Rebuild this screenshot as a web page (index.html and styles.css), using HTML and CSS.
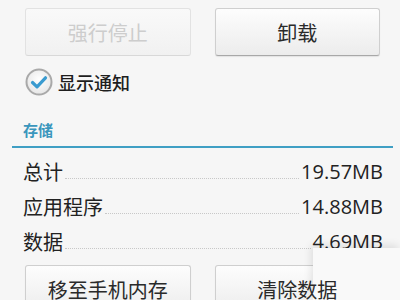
FILE: index.html
```html
<!DOCTYPE html>
<html lang="zh-CN">
<head>
<meta charset="utf-8">
<link rel="stylesheet" href="styles.css">
</head>
<body>
<div class="page">
  <div class="btn-row top">
    <div class="btn disabled"><span class="btn-text">强行停止</span></div>
    <div class="btn"><span class="btn-text">卸载</span></div>
  </div>
  <div class="check-row">
    <svg class="check" width="28" height="28" viewBox="0 0 28 28">
      <defs>
        <radialGradient id="g" cx="50%" cy="40%" r="60%">
          <stop offset="0" stop-color="#ffffff"/>
          <stop offset="1" stop-color="#e6e6e6"/>
        </radialGradient>
      </defs>
      <circle cx="14" cy="14" r="12.5" fill="url(#g)" stroke="#a9a9a9" stroke-width="2"/>
      <path d="M7.5 14.5 L12 18.8 L20.5 9.8" fill="none" stroke="#3a9bd0" stroke-width="3.2" stroke-linecap="round" stroke-linejoin="round"/>
    </svg>
    <span class="check-label">显示通知</span>
  </div>
  <div class="section">存储</div>
  <div class="rows">
    <div class="row"><span class="label">总计</span><span class="dots"></span><span class="value">19.57MB</span></div>
    <div class="row"><span class="label">应用程序</span><span class="dots"></span><span class="value">14.88MB</span></div>
    <div class="row"><span class="label">数据</span><span class="dots"></span><span class="value">4.69MB</span></div>
  </div>
  <div class="btn-row bottom">
    <div class="btn"><span class="btn-text">移至手机内存</span></div>
    <div class="btn"><span class="btn-text">清除数据</span></div>
  </div>
  <div class="cover"></div>
</div>
</body>
</html>
```
FILE: styles.css
```css
html, body {
  margin: 0;
  padding: 0;
  background: #f6f6f6;
}
.page {
  position: relative;
  width: 400px;
  height: 300px;
  overflow: hidden;
  font-family: "Noto Sans CJK SC", "Open Sans", sans-serif;
  color: #222;
}
.btn-row {
  display: flex;
  gap: 24px;
  padding: 0 20px 0 25px;
}
.btn-row.top {
  padding-top: 8px;
}
.btn-row.bottom {
  margin-top: 6px;
}
.btn {
  flex: 1;
  height: 46px;
  display: flex;
  align-items: center;
  justify-content: center;
  font-size: 20px;
  color: #2a2a2a;
  background: linear-gradient(#fdfdfd, #ececec);
  border: 1px solid #cfcfcf;
  border-bottom-color: #a8a8a8;
  border-radius: 3px;
  box-shadow: 0 1px 1px rgba(0,0,0,0.08);
}
.btn-text {
  position: relative;
  z-index: 2;
}
.btn.disabled {
  color: #cdcdcd;
  background: linear-gradient(#f9f9f9, #f1f1f1);
  border-color: #e2e2e2;
  border-bottom-color: #d8d8d8;
  box-shadow: none;
}
.check-row {
  display: flex;
  align-items: center;
  gap: 5px;
  margin-top: 12px;
  padding-left: 25px;
  height: 28px;
}
.check {
  display: block;
}
.check-label {
  font-size: 18px;
  font-weight: 500;
  color: #1e1e1e;
}
.section {
  margin: 20px 7px 0 12px;
  padding: 0 0 3px 11px;
  height: 27px;
  line-height: 27px;
  font-size: 15px;
  font-weight: 700;
  color: #3a96bd;
  border-bottom: 2px solid #3f9fc4;
}
.rows {
  padding: 6px 17px 0 23px;
}
.row {
  display: flex;
  align-items: center;
  height: 35px;
}
.label {
  font-size: 20px;
  color: #222;
}
.dots {
  flex: 1;
  align-self: flex-end;
  height: 0;
  margin: 0 2px 10px 2px;
  border-bottom: 1px dotted #c8c8c8;
}
.value {
  font-family: "Open Sans", "Noto Sans", sans-serif;
  font-size: 20px;
  color: #222;
}
.cover {
  position: absolute;
  z-index: 1;
  left: 313px;
  top: 248px;
  right: 0;
  bottom: 0;
  background: #f9f9f9;
  box-shadow: -2px -3px 8px rgba(0,0,0,0.10);
}
```
